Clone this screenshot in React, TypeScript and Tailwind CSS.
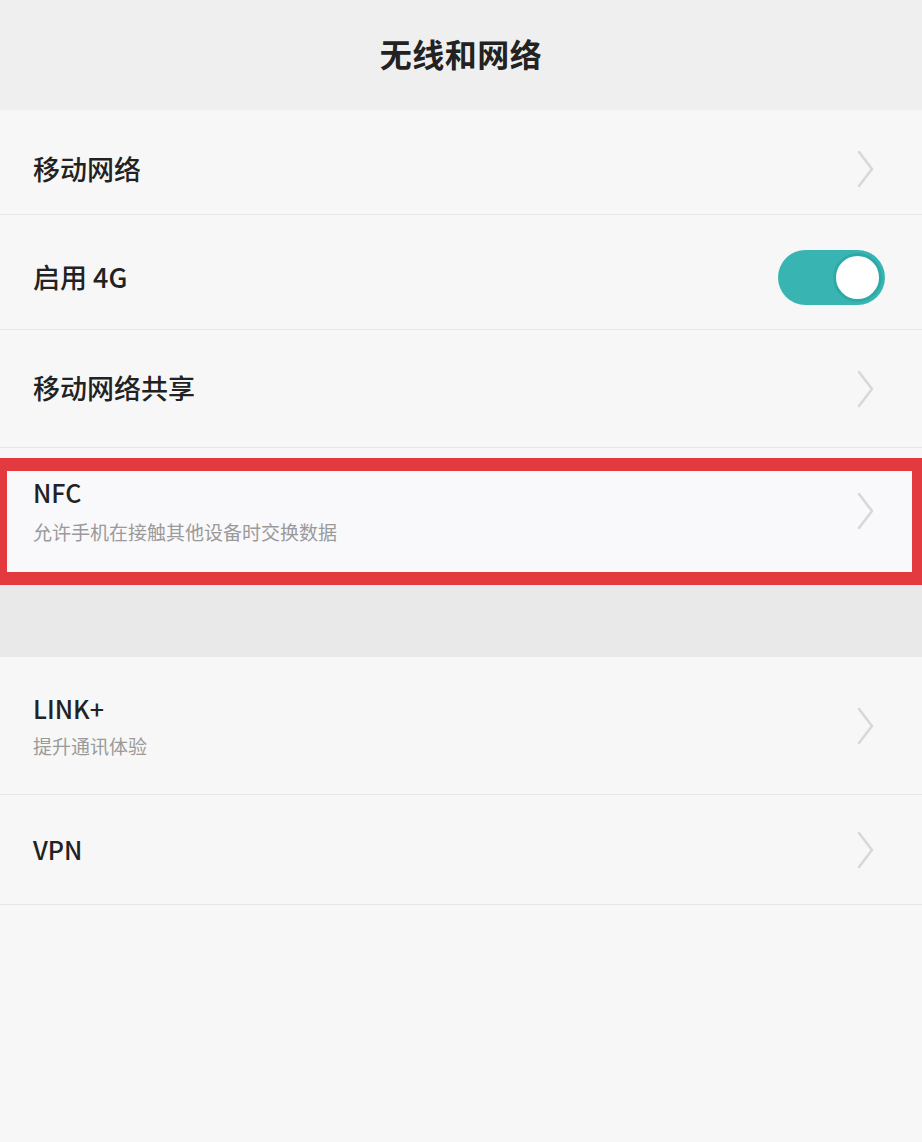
import React from "react";

const font = { fontFamily: '"Noto Sans CJK SC", "Noto Sans", sans-serif' };

function Chevron() {
  return (
    <svg width="26" height="40" viewBox="0 0 26 40" className="shrink-0">
      <path d="M7 3 L20 20 L7 37" fill="none" stroke="#d8d8d8" strokeWidth="2.6" strokeLinecap="round" strokeLinejoin="round" />
    </svg>
  );
}

function Toggle() {
  return (
    <div className="w-[107px] h-[55px] rounded-full bg-[#38b5b3] flex items-center justify-end pr-[3px]">
      <div className="w-[49px] h-[49px] rounded-full bg-white border-[3px] border-[#2fa9a7]" />
    </div>
  );
}

export default function App() {
  return (
    <div className="w-[922px] h-[1142px] bg-[#f7f7f7] overflow-hidden text-[#222]" style={font}>
      <div className="h-[110px] bg-[#efefef] flex items-center justify-center pb-[4px]">
        <span className="text-[32px] font-bold tracking-[0.5px]">无线和网络</span>
      </div>

      <div className="h-[105px] flex items-center justify-between pl-[33px] pr-[44px] pt-[14px] border-b border-[#e6e6e6]">
        <span className="text-[27px] font-medium">移动网络</span>
        <Chevron />
      </div>

      <div className="h-[115px] flex items-center justify-between pl-[33px] pr-[37px] pt-[10px] border-b border-[#e6e6e6]">
        <span className="text-[27px] font-medium">启用 4G</span>
        <Toggle />
      </div>

      <div className="h-[118px] flex items-center justify-between pl-[33px] pr-[44px] border-b border-[#e6e6e6]">
        <span className="text-[27px] font-medium">移动网络共享</span>
        <Chevron />
      </div>

      <div className="h-[10px]" />

      <div className="h-[127px] border-t-[13px] border-b-[13px] border-l-[7px] border-r-[10px] border-[#e33a40] bg-[#f9f8fa] flex items-center justify-between pl-[26px] pr-[34px] pb-[22px]">
        <div className="flex flex-col">
          <span className="text-[25px] font-medium leading-[34px]">NFC</span>
          <span className="text-[19px] text-[#9a9a9a] leading-[30px] mt-[8px]">允许手机在接触其他设备时交换数据</span>
        </div>
        <Chevron />
      </div>

      <div className="h-[72px] bg-[#e9e9e9]" />

      <div className="h-[138px] flex items-center justify-between pl-[33px] pr-[44px] border-b border-[#e6e6e6]">
        <div className="flex flex-col">
          <span className="text-[25px] font-medium leading-[34px]">LINK+</span>
          <span className="text-[19px] text-[#9a9a9a] leading-[30px] mt-[6px]">提升通讯体验</span>
        </div>
        <Chevron />
      </div>

      <div className="h-[110px] flex items-center justify-between pl-[33px] pr-[44px] border-b border-[#e6e6e6]">
        <span className="text-[25px] font-medium">VPN</span>
        <Chevron />
      </div>
    </div>
  );
}
